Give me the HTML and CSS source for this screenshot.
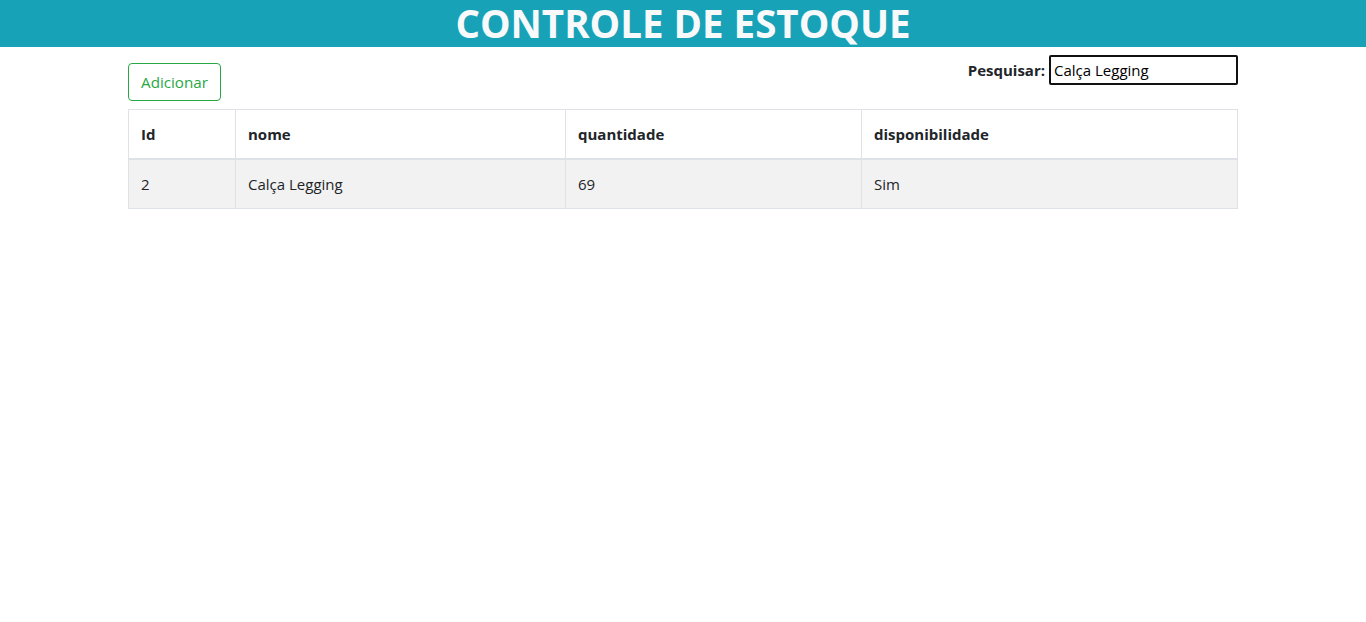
FILE: index.html
```html
<!DOCTYPE html>
<html lang="pt-BR">
<head>
<meta charset="utf-8">
<title>Controle de Estoque</title>
<link rel="stylesheet" href="styles.css">
</head>
<body>
<header class="topbar"><h1 class="title">CONTROLE DE ESTOQUE</h1></header>
<main class="container">
  <div class="toolbar">
    <button class="btn-add" type="button">Adicionar</button>
    <label class="search"><span class="search-label">Pesquisar:</span><input class="search-input" type="text" value="Calça Legging" spellcheck="true"></label>
  </div>
  <table class="grid">
    <thead>
      <tr><th class="c-id">Id</th><th class="c-nome">nome</th><th class="c-qtd">quantidade</th><th class="c-disp">disponibilidade</th></tr>
    </thead>
    <tbody>
      <tr><td>2</td><td>Calça Legging</td><td>69</td><td>Sim</td></tr>
    </tbody>
  </table>
</main>
</body>
</html>
```
FILE: styles.css
```css
* { box-sizing: border-box; }
html, body { margin: 0; padding: 0; background: #fff; }
body {
  font-family: "Open Sans", "Noto Sans", "Liberation Sans", sans-serif;
  font-size: 16px;
  line-height: 1.5;
  color: #212529;
}
.topbar {
  background: #17a2b8;
  height: 47px;
  display: flex;
  justify-content: center;
  align-items: center;
}
.title {
  margin: 0;
  color: #f8f9fa;
  font-size: 38.5px;
  font-weight: 700;
  line-height: 47px;
  height: 47px;
}
.container {
  width: 1110px;
  margin: 0 auto;
}
.toolbar {
  display: flex;
  justify-content: space-between;
  align-items: flex-start;
}
.btn-add {
  margin-top: 16px;
  height: 38px;
  width: 93px;
  padding: 0;
  font: inherit;
  font-size: 15.2px;
  color: #28a745;
  background: #fff;
  border: 1px solid #28a745;
  border-radius: 4px;
}
.search {
  margin-top: 8px;
  display: flex;
  align-items: center;
  gap: 4px;
}
.search-label {
  font-weight: 700;
  font-size: 15px;
}
.search-input {
  width: 189px;
  height: 30px;
  border: 2px solid #111;
  border-radius: 2px;
  padding: 0 3px;
  font: inherit;
  font-size: 15px;
  color: #000;
  outline: none;
}
.grid {
  margin-top: 8px;
  width: 1109px;
  border-collapse: collapse;
  table-layout: fixed;
}
.grid th, .grid td {
  border: 1px solid #dee2e6;
  padding: 12px;
  text-align: left;
  vertical-align: top;
  font-size: 15px;
  line-height: 24px;
}
.grid thead th { border-bottom: 2px solid #dee2e6; font-weight: 700; }
.grid tbody tr { background: #f2f2f2; }
.c-id { width: 107px; }
.c-nome { width: 330px; }
.c-qtd { width: 296px; }
.c-disp { width: 376px; }
```
